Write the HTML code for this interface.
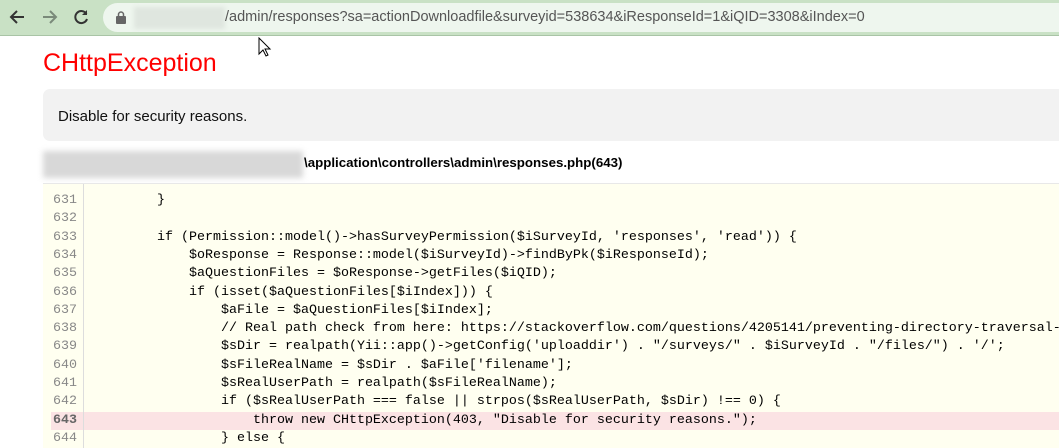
<!DOCTYPE html>
<html style="overflow:hidden"><head><meta charset="utf-8"><style>
body{margin:0;width:1059px;height:448px;overflow:hidden;background:#fff;font-family:"Liberation Sans",sans-serif;position:relative}
.bar{position:absolute;left:0;top:0;width:1059px;height:35px;background:#c9e1c5;border-bottom:1px solid #a9c4a6;overflow:hidden}
.url{position:absolute;left:103px;top:3px;width:956px;height:29px;border-radius:15px 0 0 15px;background:#eef6ee;overflow:hidden}
.url span{position:absolute;left:122px;top:6px;font-size:14.5px;color:#555;white-space:nowrap}
.blur{position:absolute;left:31px;top:4px;width:91px;height:22px;background:#dfe6df;filter:blur(2px)}
h1{position:absolute;left:43px;top:49px;margin:0;font-weight:normal;color:#f00;font-size:25px}
.msg{position:absolute;left:43px;top:89px;width:1016px;height:52px;border-radius:7px 0 0 7px;background:#f2f2f2}
.msg span{position:absolute;left:15px;top:19px;font-size:15px;color:#111}
.file{position:absolute;left:304px;top:155px;font-size:13.3px;font-weight:bold;color:#000}
.fblur{position:absolute;left:43px;top:151px;width:260px;height:27px;background:#d8d8d8;filter:blur(3px)}
.code{position:absolute;left:43px;top:183px;width:1016px;height:270px;background:#fffff0;border-top:1px solid #e8e8e8;overflow:hidden}
.ln{position:absolute;left:0;width:1016px;height:18.3px;font-family:"Liberation Mono",monospace;font-size:13.33px;line-height:18.3px;white-space:pre;color:#000}
.ln b{position:absolute;left:0;width:34px;text-align:right;font-weight:normal;color:#888}
.ln i{font-style:normal;position:absolute;left:50px}
.sep{position:absolute;left:40px;top:0;width:1px;height:270px;background:#ddd}
.hl{background:#fbe3e4}
.hl b{font-weight:bold;color:#666}
</style></head><body>
<div class="bar">
<svg style="position:absolute;left:8px;top:8px" width="18" height="18" viewBox="0 0 18 18"><path d="M16 9H3M9 3L3 9l6 6" stroke="#333" stroke-width="2" fill="none"/></svg>
<svg style="position:absolute;left:41px;top:8px" width="18" height="18" viewBox="0 0 18 18"><path d="M2 9h13M9 3l6 6-6 6" stroke="#7a8a7a" stroke-width="2" fill="none"/></svg>
<svg style="position:absolute;left:72px;top:8px" width="18" height="18" viewBox="0 0 18 18"><path d="M14.5 6A6 6 0 1 0 15 11" stroke="#333" stroke-width="2" fill="none"/><path d="M15 2v5h-5z" fill="#333"/></svg>
<div class="url"><svg style="position:absolute;left:13px;top:8px" width="10" height="13" viewBox="0 0 10 13"><rect x="0" y="5" width="10" height="8" rx="1" fill="#666"/><path d="M2.5 5V3.5a2.5 2.5 0 0 1 5 0V5" stroke="#666" stroke-width="1.5" fill="none"/></svg><div class="blur"></div><span>/admin/responses?sa=actionDownloadfile&amp;surveyid=538634&amp;iResponseId=1&amp;iQID=3308&amp;iIndex=0</span></div>
</div>
<svg style="position:absolute;left:258px;top:37px" width="14" height="22" viewBox="0 0 14 22"><path d="M1 1v16l4-4 3 6 2-1-3-6h5z" fill="#fff" stroke="#000"/></svg>
<h1>CHttpException</h1>
<div class="msg"><span>Disable for security reasons.</span></div>
<div class="fblur"></div>
<div class="file">\application\controllers\admin\responses.php(643)</div>
<div class="code">
<div class="ln" style="top:8px"><b>631</b><i>        }</i></div>
<div class="ln" style="top:26.3px"><b>632</b><i></i></div>
<div class="ln" style="top:44.6px"><b>633</b><i>        if (Permission::model()-&gt;hasSurveyPermission($iSurveyId, 'responses', 'read')) {</i></div>
<div class="ln" style="top:62.9px"><b>634</b><i>            $oResponse = Response::model($iSurveyId)-&gt;findByPk($iResponseId);</i></div>
<div class="ln" style="top:81.2px"><b>635</b><i>            $aQuestionFiles = $oResponse-&gt;getFiles($iQID);</i></div>
<div class="ln" style="top:99.5px"><b>636</b><i>            if (isset($aQuestionFiles[$iIndex])) {</i></div>
<div class="ln" style="top:117.8px"><b>637</b><i>                $aFile = $aQuestionFiles[$iIndex];</i></div>
<div class="ln" style="top:136.1px"><b>638</b><i>                // Real path check from here: https://stackoverflow.com/questions/4205141/preventing-directory-traversal-in-php-but-allowing-paths</i></div>
<div class="ln" style="top:154.4px"><b>639</b><i>                $sDir = realpath(Yii::app()-&gt;getConfig('uploaddir') . "/surveys/" . $iSurveyId . "/files/") . '/';</i></div>
<div class="ln" style="top:172.7px"><b>640</b><i>                $sFileRealName = $sDir . $aFile['filename'];</i></div>
<div class="ln" style="top:191px"><b>641</b><i>                $sRealUserPath = realpath($sFileRealName);</i></div>
<div class="ln" style="top:209.3px"><b>642</b><i>                if ($sRealUserPath === false || strpos($sRealUserPath, $sDir) !== 0) {</i></div>
<div class="ln hl" style="top:227.6px;left:8px;width:1008px"><b style="left:-8px;width:34px">643</b><i style="left:42px">                    throw new CHttpException(403, "Disable for security reasons.");</i></div>
<div class="ln" style="top:245.9px"><b>644</b><i>                } else {</i></div>
<div class="sep"></div>
</div>
</body></html>
